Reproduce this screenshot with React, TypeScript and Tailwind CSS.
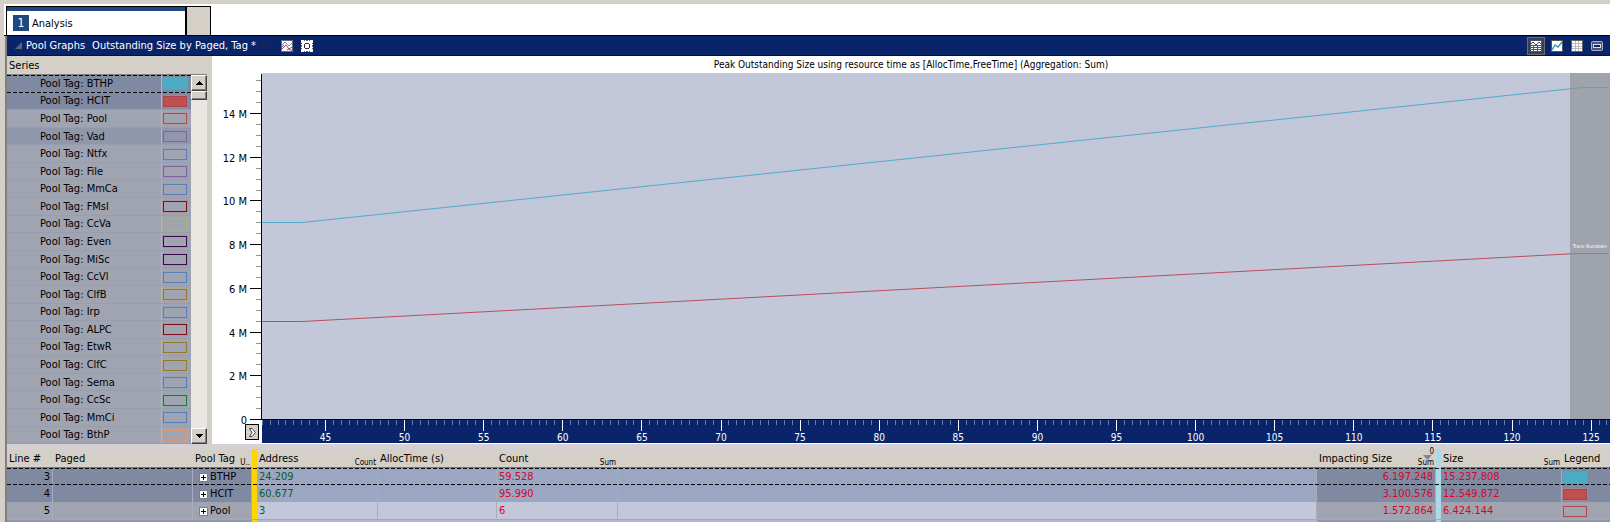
import React from "react";

const DASH = "bg-[repeating-linear-gradient(90deg,#000_0px,#000_4px,transparent_4px,transparent_6px)]";

type Series = { tag: string; stroke: string; glow: string; fill?: string; bg?: string };

const SERIES: Series[] = [
  { tag: "BTHP", stroke: "#4bacc6", glow: "#6f9db6", fill: "#4bacc6", bg: "#8089a2" },
  { tag: "HCIT", stroke: "#a9444c", glow: "#c9808c", fill: "#c0504d", bg: "#8089a2" },
  { tag: "Pool", stroke: "#b04a4e", glow: "#d08a90" },
  { tag: "Vad", stroke: "#8064a2", glow: "#a08cb8", bg: "#9197ab" },
  { tag: "Ntfx", stroke: "#5580bd", glow: "#88a0c8" },
  { tag: "File", stroke: "#8064a2", glow: "#a08cb8" },
  { tag: "MmCa", stroke: "#5580bd", glow: "#88a0c8" },
  { tag: "FMsl", stroke: "#7a1016", glow: "#d08088" },
  { tag: "CcVa", stroke: "#9bb567", glow: "#a8c080" },
  { tag: "Even", stroke: "#3c0a48", glow: "#a080b0" },
  { tag: "MiSc", stroke: "#3c0a48", glow: "#b080c0" },
  { tag: "CcVl", stroke: "#5580bd", glow: "#88a0c8" },
  { tag: "ClfB", stroke: "#96782a", glow: "#c4ac60" },
  { tag: "Irp", stroke: "#5580bd", glow: "#88a0c8" },
  { tag: "ALPC", stroke: "#7a1016", glow: "#d08088" },
  { tag: "EtwR", stroke: "#96782a", glow: "#c4ac60" },
  { tag: "ClfC", stroke: "#96782a", glow: "#c4ac60" },
  { tag: "Sema", stroke: "#5580bd", glow: "#88a0c8" },
  { tag: "CcSc", stroke: "#1c7a38", glow: "#80b898" },
  { tag: "MmCi", stroke: "#5580bd", glow: "#88a0c8" },
  { tag: "BthP", stroke: "#dc9468", glow: "#d8a48c" },
];

function Swatch({ s }: { s: Series }) {
  return (
    <svg width="26" height="13" className="block" aria-hidden="true">
      <rect x="0.5" y="0.5" width="25" height="12" fill="none" stroke={s.glow} strokeOpacity="0.5" />
      <rect x="1.5" y="1.5" width="23" height="10" fill={s.fill ?? "none"} stroke={s.stroke} />
    </svg>
  );
}

function ScrollButton({ up }: { up?: boolean }) {
  return (
    <button
      type="button"
      aria-label={up ? "Scroll up" : "Scroll down"}
      className="flex h-4 w-4 items-center justify-center border border-t-white border-l-white border-r-[#404040] border-b-[#404040] bg-[#d4d0c8] shadow-[inset_-1px_-1px_0_#808080]"
    >
      <svg width="7" height="4" shapeRendering="crispEdges">
        <path d={up ? "M3 0h1v1h1v1h1v1h1v1H0V3h1V2h1V1h1z" : "M0 0h7v1H6v1H5v1H4v1H3V3H2V2H1V1H0z"} />
      </svg>
    </button>
  );
}

function SeriesPanel() {
  return (
    <section aria-label="Series" className="flex w-[205px] shrink-0 flex-col border-r-[5px] border-[#d4d0c8] bg-[#d4d0c8]">
      <h2 className="h-[18px] pl-0.5 pt-0.5 leading-4">Series</h2>
      <div className="h-px shrink-0 bg-[#808080]" />
      <div className="flex min-h-0 flex-1">
        <ul className="flex flex-1 flex-col bg-[#a0a3b0]">
          {SERIES.map((s, i) => (
            <li
              key={s.tag}
              className="relative flex min-h-0 flex-1 items-center border-b border-[#999eae] pl-[33px]"
              style={{ backgroundColor: s.bg }}
            >
              {i === 0 && <span className={`absolute inset-x-0 top-0 h-px ${DASH}`} />}
              {i === 0 && <span className={`absolute inset-x-0 -bottom-px z-10 h-px ${DASH}`} />}
              <span className="flex-1 whitespace-nowrap pt-px leading-[14px]">Pool Tag: {s.tag}</span>
              <span className="flex h-full w-[30px] items-center border-l border-[#b4b4ba] pt-px">
                <Swatch s={s} />
              </span>
            </li>
          ))}
        </ul>
        <div className="flex w-4 flex-col bg-[#eae7e3]">
          <ScrollButton up />
          <div className="h-[9px] border border-t-white border-l-white border-r-[#404040] border-b-[#404040] bg-[#d4d0c8] shadow-[inset_-1px_-1px_0_#808080]" />
          <div className="flex-1" />
          <ScrollButton />
        </div>
      </div>
    </section>
  );
}

const PLOT_W = 1348;
const timeToPct = (t: number) => `${((63.5 + (t - 45) * 15.82) / PLOT_W) * 100}%`;
const sizeToY = (m: number) => Math.round(346 - m * 21.857) + 0.5;
const HALF_STEPS = Array.from({ length: 32 }, (_, i) => i * 0.5);
const TIMES = Array.from({ length: 171 }, (_, i) => 41 + i * 0.5).filter((t) => t <= 126);

function YAxis() {
  return (
    <div className="relative w-[50px] shrink-0">
      <svg width="50" height="356" className="block" fill="#000">
        <path d="M49.5 1V347" stroke="#000" />
        {HALF_STEPS.map((m) => {
          const y = sizeToY(m);
          const major = m % 2 === 0;
          return (
            <g key={m}>
              <path d={major ? `M38 ${y}H50` : `M44 ${y}H49`} stroke={major ? "#000" : "#909090"} />
              {major && (
                <text x={35} y={y + 4} textAnchor="end" fontSize="11">
                  {m === 0 ? "0" : `${m} M`}
                </text>
              )}
            </g>
          );
        })}
      </svg>
      <button
        type="button"
        aria-label="Expand axis"
        className="absolute bottom-[3px] left-[33px] flex h-4 w-3.5 items-center justify-center border border-black bg-[#d4d0c8]"
      >
        <svg width="9" height="11" fill="#fff" stroke="#404048">
          <path d="M1.5 1.5H4L7.5 5.5L4 9.5H1.5L4 5.5z" />
        </svg>
      </button>
    </div>
  );
}

function Plot() {
  return (
    <div className="min-w-0 flex-1">
      <svg width="100%" height="346" className="block bg-[#c3c7da]">
        <svg width="100%" height="346" viewBox="0 0 1348 346" preserveAspectRatio="none" fill="none">
          <path d="M0 149.5H40L1321 14.5H1347" stroke="#50abc8" vectorEffect="non-scaling-stroke" />
          <path d="M0 248.5H40L1315 180.5H1347" stroke="#b8505a" vectorEffect="non-scaling-stroke" />
          <path d="M1308 0H1348V346H1308z" fill="#8c9094" fillOpacity="0.66" />
        </svg>
        <text x="98.5%" y="175" textAnchor="middle" fontSize="5" fill="#fff">
          Trace Rundown
        </text>
      </svg>
      <svg width="100%" height="24" className="block bg-[#0a246a]" fontSize="10" fill="#fff" shapeRendering="crispEdges">
        <rect width="100%" height="1" fill="#000" />
        {TIMES.map((t) => {
          const major = t % 5 === 0;
          return (
            <React.Fragment key={t}>
              <line x1={timeToPct(t)} x2={timeToPct(t)} y1="1" y2={major ? 12 : 6} stroke={major ? "#fff" : "#6c7ca8"} />
              {major && (
                <text x={timeToPct(t)} y="22" textAnchor="middle">
                  {t}
                </text>
              )}
            </React.Fragment>
          );
        })}
      </svg>
    </div>
  );
}

function ChartPanel() {
  return (
    <section aria-label="Chart" className="min-w-0 flex-1 bg-white pb-px">
      <h2 className="h-[17px] text-center text-[10px] leading-[17px]">
        Peak Outstanding Size using resource time as [AllocTime,FreeTime] (Aggregation: Sum)
      </h2>
      <div className="flex">
        <YAxis />
        <Plot />
      </div>
    </section>
  );
}

function TitleBar() {
  return (
    <header className="flex h-5 items-center border-b border-[#050f50] bg-[#0a246a] text-white">
      <svg width="7" height="7" className="ml-2 shrink-0">
        <path d="M7 0V7H0z" fill="#5c6478" />
      </svg>
      <span className="ml-1 mt-px">Pool Graphs</span>
      <button type="button" className="mt-px ml-[7px] flex items-center whitespace-nowrap">
        Outstanding Size by Paged, Tag *
        <svg width="7" height="4" className="ml-1">
          <path d="M0 0H7L3.5 4z" fill="#1c2850" />
        </svg>
      </button>
      <button type="button" aria-label="Graph colors" className="ml-3.5">
        <svg width="12" height="12" className="block" fill="none">
          <rect x="0.5" y="0.5" width="11" height="11" fill="#fff" stroke="#6a6a70" />
          <path d="M1 5L4 2L8 6L11 3" stroke="#4aa0c0" />
          <path d="M1 9L5 5L8 9L11 7" stroke="#c03848" />
          <path d="M1 7L3 5M6 10L8 9L11 10.5" stroke="#5060a8" />
        </svg>
      </button>
      <button type="button" aria-label="Graph settings" className="ml-2">
        <svg width="12" height="12" className="block" shapeRendering="crispEdges">
          <rect width="12" height="12" fill="#fff" />
          <path d="M3 0h1v1H3zM5 0h2v1H5zM8 0h1v1H8zM3 11h1v1H3zM5 11h2v1H5zM8 11h1v1H8zM0 3h1v1H0zM0 5h1v2H0zM0 8h1v1H0zM11 3h1v1h-1zM11 5h1v2h-1zM11 8h1v1h-1z" fill="#555c70" />
          <path d="M3 3h6v6H3z" fill="#303030" />
          <path d="M4 4h4v4H4zM3 3h1v1H3zM8 3h1v1H8zM3 8h1v1H3zM8 8h1v1H8z" fill="#fff" />
        </svg>
      </button>
      <div className="ml-auto flex items-center gap-1 pr-[5px]">
        <button type="button" aria-label="Graph and table" className="flex h-[18px] w-[18px] items-center justify-center border border-[#6c6c6c] bg-[#34405c]">
          <svg width="12" height="12" shapeRendering="crispEdges">
            <rect width="12" height="12" fill="#555" />
            <path d="M1 1h10v4H1zM1 6h2v1H1zM4 6h3v1H4zM8 6h3v1H8zM1 8h2v1H1zM4 8h3v1H4zM8 8h3v1H8zM1 10h2v1H1zM4 10h3v1H4zM8 10h3v1H8z" fill="#fff" />
            <path d="M1 3h1v1H1zM2 2h2v1H2zM4 3h1v1H4zM5 4h2v1H5zM7 3h1v1H7zM8 2h2v1H8zM10 3h1v1h-1z" fill="#4048a0" />
          </svg>
        </button>
        <button type="button" aria-label="Graph only" className="flex h-4 w-4 items-center justify-center">
          <svg width="12" height="12">
            <rect x="0.5" y="0.5" width="11" height="11" fill="#fff" stroke="#555" />
            <path d="M1 10L4 5L7 7L11 2" fill="none" stroke="#2c98bc" strokeWidth="1.4" />
          </svg>
        </button>
        <button type="button" aria-label="Table only" className="flex h-4 w-4 items-center justify-center">
          <svg width="12" height="12">
            <rect x="0.5" y="0.5" width="11" height="11" fill="#fff" stroke="#666" />
            <path d="M4.5 1V11M7.5 1V11M1 3.5H11M1 6.5H11M1 8.5H11" stroke="#bbb" />
          </svg>
        </button>
        <button type="button" aria-label="Maximize" className="flex h-4 w-4 items-center justify-center">
          <svg width="12" height="10" fill="none">
            <rect x="0.5" y="0.5" width="11" height="9" rx="1" fill="#4c5878" stroke="#a8b0c4" />
            <rect x="2.5" y="3.5" width="7" height="3" fill="#0a246a" stroke="#dde" />
          </svg>
        </button>
      </div>
    </header>
  );
}

type Row = { line: number; tag: string; address: string; count: string; impacting: string; size: string; series: number };
const ROWS: Row[] = [
  { line: 3, tag: "BTHP", address: "24.209", count: "59.528", impacting: "6.197.248", size: "15.237.808", series: 0 },
  { line: 4, tag: "HCIT", address: "60.677", count: "95.990", impacting: "3.100.576", size: "12.549.872", series: 1 },
  { line: 5, tag: "Pool", address: "3", count: "6", impacting: "1.572.864", size: "6.424.144", series: 2 },
];

const Sub = ({ children }: { children: React.ReactNode }) => (
  <span className="self-end text-[8px] leading-[9px]">{children}</span>
);

function DataTable() {
  const th = "h-[19px] p-0 px-0.5 pt-0.5 text-left align-middle font-normal whitespace-nowrap";
  return (
    <table className="w-full table-fixed border-separate border-spacing-0">
      <colgroup>
        <col className="w-[46px]" />
        <col className="w-[140px]" />
        <col className="w-[59px]" />
        <col className="w-[5px]" />
        <col className="w-[121px]" />
        <col className="w-[119px]" />
        <col className="w-[121px]" />
        <col />
        <col className="w-[119px]" />
        <col className="w-[5px]" />
        <col className="w-[121px]" />
        <col className="w-[48px]" />
      </colgroup>
      <thead className="bg-[#d4d0c8]">
        <tr className="[&>.line]:border-b [&>.line]:border-b-[#77756f]">
          <th className={`line ${th}`}>Line #</th>
          <th className={`line ${th}`}>Paged</th>
          <th className={`line ${th}`}>
            <span className="flex justify-between">Pool Tag <Sub>U..</Sub></span>
          </th>
          <th className="bg-[#ffd400]" aria-label="Key divider" />
          <th className={`line ${th}`}>
            <span className="flex justify-between">Address <Sub>Count</Sub></span>
          </th>
          <th className={`line ${th}`}>AllocTime (s)</th>
          <th className={`line ${th}`}>
            <span className="flex justify-between">Count <Sub>Sum</Sub></span>
          </th>
          <th className="line" />
          <th className={`line ${th}`}>
            <span className="relative flex justify-between">
              Impacting Size <Sub>Sum</Sub>
              <svg width="9" height="5" className="absolute right-0.5 top-1">
                <path d="M0 0H9L4.5 5z" fill="#858585" />
              </svg>
              <span className="absolute right-0 -top-1 text-[8px] leading-[9px]">0</span>
            </span>
          </th>
          <th className="bg-[#add8e6]" aria-label="Graph divider" />
          <th className={`line ${th}`}>
            <span className="flex justify-between">Size <Sub>Sum</Sub></span>
          </th>
          <th className={`line ${th}`}>Legend</th>
        </tr>
      </thead>
      <tbody>
        {ROWS.map((r, i) => {
          const selected = i < 2;
          const grey = selected ? "bg-[#8089a2]" : "bg-[#a0a3b0]";
          const blue = selected ? "bg-[#9ba6c3]" : "bg-[#c3c7da]";
          const cell = "border-r border-[#a9adba] p-0 px-0.5 pt-px leading-4 whitespace-nowrap";
          return (
            <tr key={r.line} className="relative h-[17px]">
              <td className={`${cell} ${grey} text-right`}>
                {r.line}
                {i === 0 && <span className={`absolute inset-x-0 top-0 h-px ${DASH}`} />}
                {i === 0 && <span className={`absolute inset-x-0 bottom-0 h-px ${DASH}`} />}
              </td>
              <td className={`${cell} ${grey}`} />
              <td className={`${cell} ${grey}`}>
                <span className="flex items-center gap-0.5 pl-1">
                  <button type="button" aria-label={`Expand ${r.tag}`}>
                    <svg width="9" height="9" className="block" shapeRendering="crispEdges">
                      <rect x="0.5" y="0.5" width="8" height="8" fill="#fff" stroke="#808080" />
                      <path d="M2 4.5H7M4.5 2V7" stroke="#000" />
                    </svg>
                  </button>
                  {r.tag}
                </span>
              </td>
              <td className="bg-[#ffd400] p-0" />
              <td className={`${cell} ${blue} text-[#0b5c24]`}>{r.address}</td>
              <td className={`${cell} ${blue}`} />
              <td className={`${cell} ${blue} text-[#d8061f]`}>{r.count}</td>
              <td className={`${cell} ${blue}`} />
              <td className={`${cell} ${grey} text-right text-[#d8061f]`}>{r.impacting}</td>
              <td className="bg-[#add8e6] p-0" />
              <td className={`${cell} ${grey} text-[#d8061f]`}>{r.size}</td>
              <td className={`${grey} p-0 pt-0.5`}>
                <Swatch s={SERIES[r.series]} />
              </td>
            </tr>
          );
        })}
        <tr className="h-[3px] [&>td]:border-t [&>td]:border-[#a4a8b8] [&>td]:p-0">
          <td colSpan={3} className="bg-[#9197ab]" />
          <td className="bg-[#ffd400]" />
          <td colSpan={4} className="bg-[#b0b7ce]" />
          <td className="bg-[#9197ab]" />
          <td className="bg-[#add8e6]" />
          <td colSpan={2} className="bg-[#9197ab]" />
        </tr>
      </tbody>
    </table>
  );
}

export default function App() {
  return (
    <div className="flex min-h-screen flex-col bg-[#d4d0c8] pt-1 font-['DejaVu_Sans_Condensed','Noto_Sans',sans-serif] text-[11px] leading-4 text-black">
      <nav className="ml-1 flex h-8 items-end border-b border-black bg-white pl-0.5">
        <button type="button" className="flex h-[29px] w-[181px] items-center gap-[3px] border border-r-2 border-b-0 border-black bg-white pl-1.5 shadow-[inset_0_4px_0_#1f497d]">
          <span className="mt-1 flex h-4 w-4 items-center justify-center bg-[#1f497d] text-[12px] text-white">1</span>
          <span className="mt-1.5">Analysis</span>
        </button>
        <button type="button" aria-label="New tab" className="h-[29px] w-6 border border-b-0 border-l-0 border-black bg-[#d4d0c8]" />
      </nav>
      <main className="ml-[5px] flex-1 border-l-2 border-[#808080] bg-[#d4d0d0]">
        <TitleBar />
        <div className="flex">
          <SeriesPanel />
          <ChartPanel />
        </div>
        <div className="h-[5px] bg-[#d4d0d4]" />
        <DataTable />
      </main>
    </div>
  );
}
